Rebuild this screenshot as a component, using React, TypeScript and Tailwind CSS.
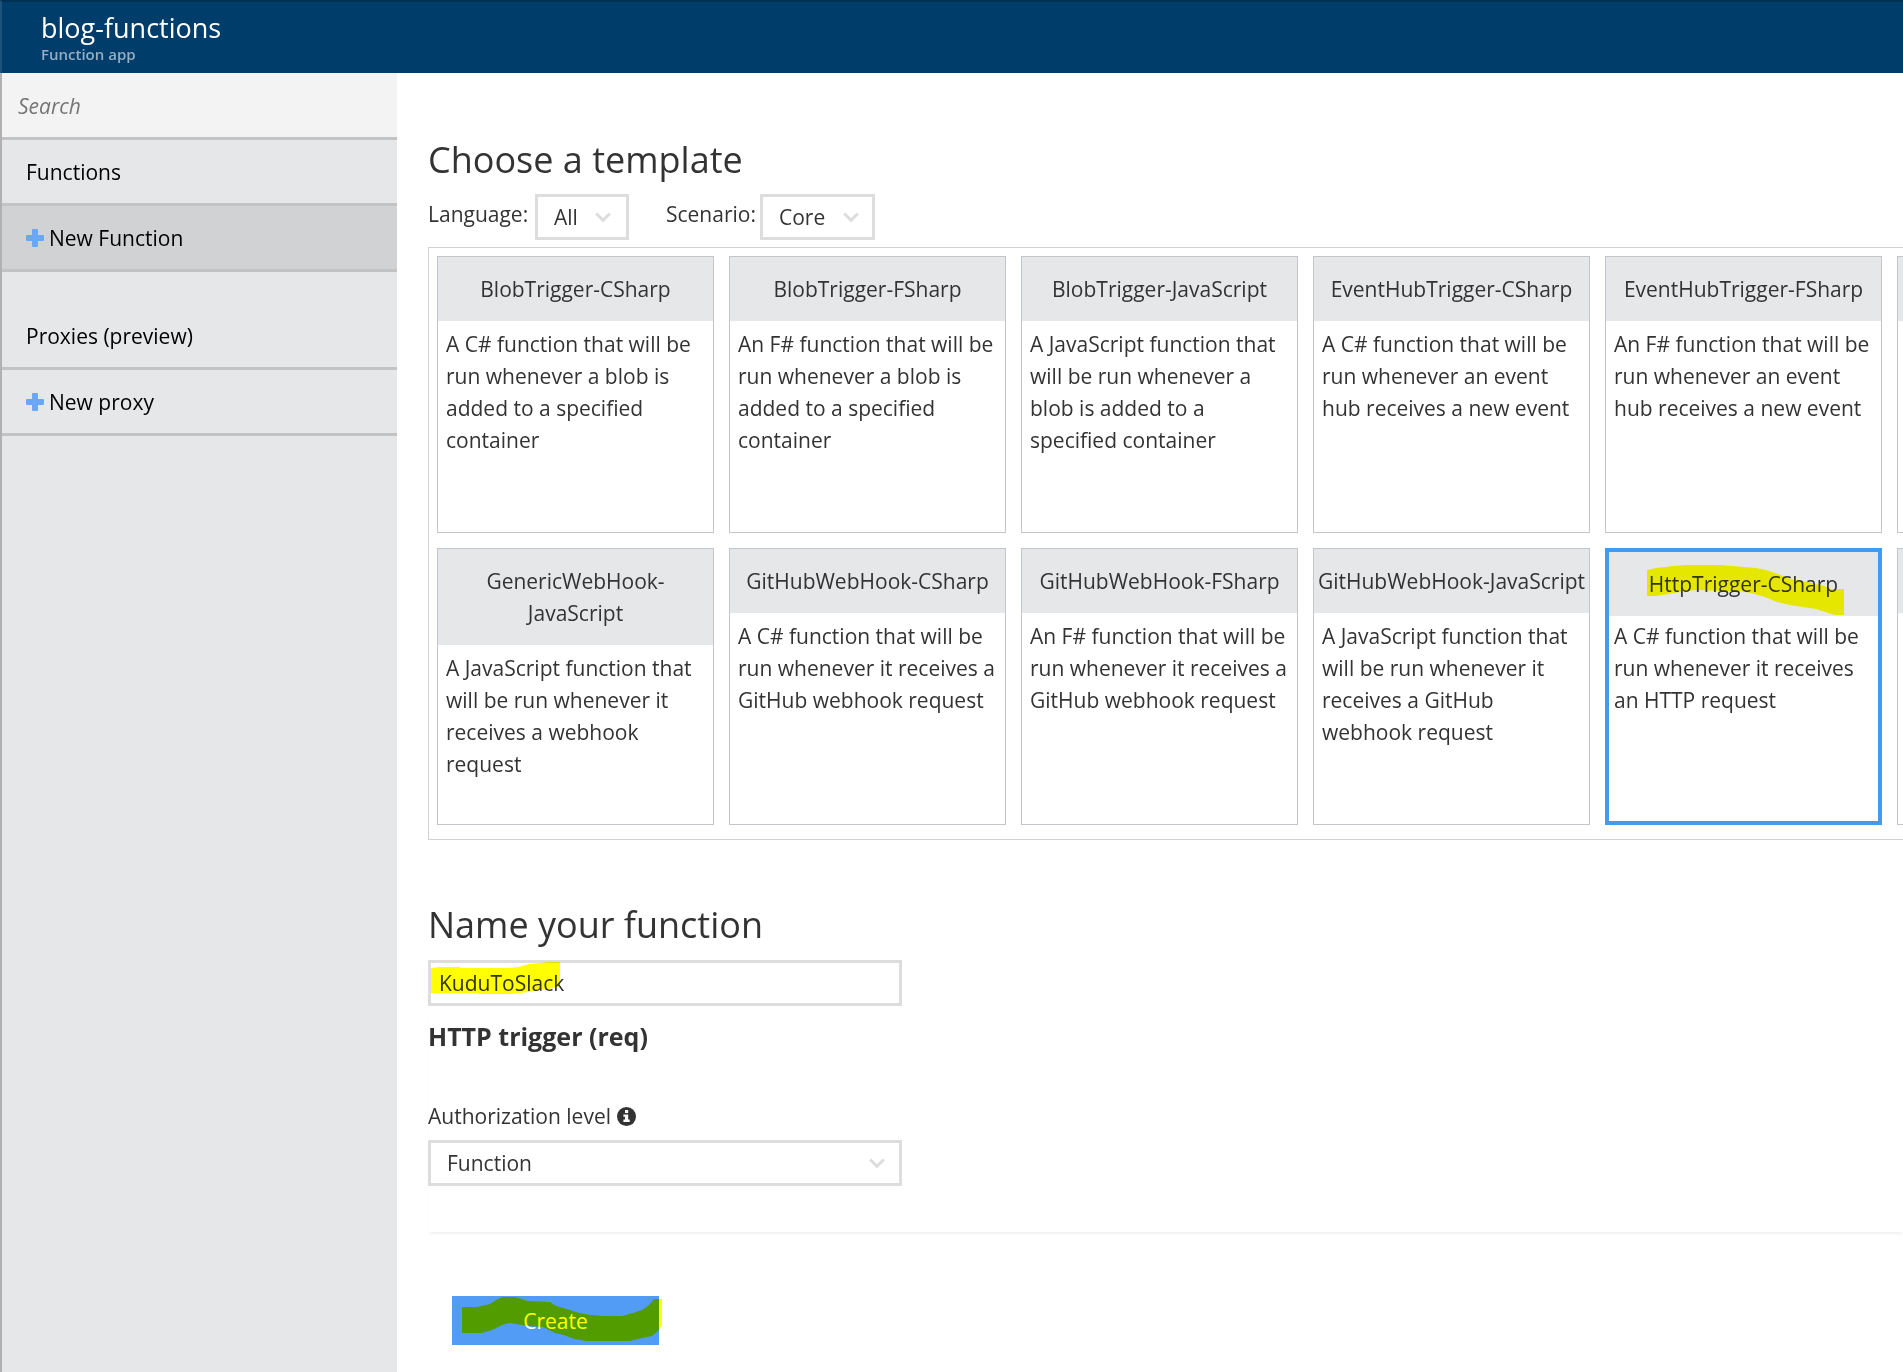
import type { ReactNode } from "react";

type Template = { title: string; text: string; selected?: boolean };

const templates: Template[] = [
  { title: "BlobTrigger-CSharp", text: "A C# function that will be run whenever a blob is added to a specified container" },
  { title: "BlobTrigger-FSharp", text: "An F# function that will be run whenever a blob is added to a specified container" },
  { title: "BlobTrigger-JavaScript", text: "A JavaScript function that will be run whenever a blob is added to a specified container" },
  { title: "EventHubTrigger-CSharp", text: "A C# function that will be run whenever an event hub receives a new event" },
  { title: "EventHubTrigger-FSharp", text: "An F# function that will be run whenever an event hub receives a new event" },
  { title: "", text: "" },
  { title: "GenericWebHook-JavaScript", text: "A JavaScript function that will be run whenever it receives a webhook request" },
  { title: "GitHubWebHook-CSharp", text: "A C# function that will be run whenever it receives a GitHub webhook request" },
  { title: "GitHubWebHook-FSharp", text: "An F# function that will be run whenever it receives a GitHub webhook request" },
  { title: "GitHubWebHook-JavaScript", text: "A JavaScript function that will be run whenever it receives a GitHub webhook request" },
  { title: "HttpTrigger-CSharp", text: "A C# function that will be run whenever it receives an HTTP request", selected: true },
  { title: "", text: "" },
];

function Plus() {
  return (
    <svg className="h-[18px] w-[18px] shrink-0" viewBox="0 0 18 18" fill="#6aa8f5" aria-hidden="true">
      <rect x="0" y="6" width="18" height="6" rx="1" />
      <rect x="6" y="0" width="6" height="18" rx="1" />
    </svg>
  );
}

function Info() {
  return (
    <svg className="h-[19px] w-[19px]" viewBox="0 0 19 19" aria-hidden="true">
      <circle cx="9.5" cy="9.5" r="9.5" fill="#333" />
      <path d="M8 3h3.2v3H8zM6.4 7.4h4.8v5.2h1.5V15H6.4v-2.4H8V9.8H6.4z" fill="#fff" />
    </svg>
  );
}

function Select({ id, options, className, arrow }: { id: string; options: string[]; className: string; arrow: string }) {
  return (
    <div className={`relative ${className}`}>
      <select
        id={id}
        className="block h-[46px] w-full appearance-none rounded-none border-3 border-[#dddddd] bg-white pl-4 leading-8 text-[#333] outline-none"
      >
        {options.map((o) => (
          <option key={o}>{o}</option>
        ))}
      </select>
      <svg
        className={`pointer-events-none absolute top-[18px] h-[11px] w-4 ${arrow}`}
        viewBox="0 0 16 11"
        fill="none"
        stroke="#dddddd"
        strokeWidth="3"
        aria-hidden="true"
      >
        <path d="M1.2 1.5 8 8.3l6.8-6.8" />
      </svg>
    </div>
  );
}

function NavLink({ children, active }: { children: ReactNode; active?: boolean }) {
  return (
    <a
      href="#"
      className={`flex h-[66px] items-center gap-[5px] border-b-3 border-[#c3c3c3] pl-6 ${active ? "bg-[#d1d2d4]" : ""}`}
    >
      <Plus />
      {children}
    </a>
  );
}

function TemplateCard({ title, text, selected }: Template) {
  return (
    <article className={`h-[277px] bg-white ${selected ? "border-4 border-[#409bf3]" : "border border-[#c2c5ca]"}`}>
      <h3 className="relative min-h-16 bg-[#e6e7e9] px-0.5 py-4 text-center">
        {title}
        {selected && (
          <svg
            className="pointer-events-none absolute top-3 left-[38px] h-[52px] w-[197px] mix-blend-multiply"
            viewBox="0 0 197 52"
            aria-hidden="true"
          >
            <path
              fill="#ffff00"
              d="M0 6 9 4 26 2 38 1H73L86 2 109 4 119 6 131 10 143 15 160 18 177 22 184 25H197V51H188L178 48 169 45 143 41 130 38 118 33 104 29 92 27H76L50 26 38 27 22 30 9 32H0Z"
            />
          </svg>
        )}
      </h3>
      <p className={selected ? "px-[5px] py-1" : "px-2 py-[7px]"}>{text}</p>
    </article>
  );
}

export default function App() {
  return (
    <div className="flex min-h-screen flex-col overflow-hidden bg-white font-['Open_Sans','Noto_Sans',sans-serif] text-[21px] leading-8 text-[#333]">
      <header className="h-[73px] border-t-2 border-l-2 border-t-[#003052] border-l-[#1c527b] bg-[#003d6b] pt-2 pl-[39px]">
        <h1 className="text-[27px] leading-9 text-white">blog-functions</h1>
        <p className="text-[15px] leading-4 font-semibold text-[#94aec3]">Function app</p>
      </header>

      <div className="flex flex-1">
        <aside className="w-[397px] shrink-0 border-l-2 border-[#b1b1b3] bg-[#e5e7e8] text-black">
          <input
            type="search"
            aria-label="Search"
            placeholder="Search"
            className="block h-[67px] w-full border-b-3 border-[#c3c3c3] bg-[#f3f3f3] pt-0.5 pl-4 outline-none placeholder:text-[#757575] placeholder:italic"
          />
          <nav>
            <h2 className="flex h-[66px] items-center border-b-3 border-[#c3c3c3] pl-6">Functions</h2>
            <NavLink active>New Function</NavLink>
            <h2 className="flex h-[98px] items-end border-b-3 border-[#c3c3c3] pb-[15px] pl-6">Proxies (preview)</h2>
            <NavLink>New proxy</NavLink>
          </nav>
        </aside>

        <main className="min-w-0 flex-1 overflow-hidden pt-16 pl-[31px]">
          <h2 className="text-[36px] leading-[46px]">Choose a template</h2>
          <div className="mt-[11px] flex">
            <label htmlFor="language" className="w-[107px] pt-1">
              Language:
            </label>
            <Select id="language" options={["All"]} className="w-[94px]" arrow="right-[18px]" />
            <label htmlFor="scenario" className="ml-[37px] w-[94px] pt-1">
              Scenario:
            </label>
            <Select id="scenario" options={["Core"]} className="w-[115px]" arrow="right-4" />
          </div>

          <section className="mt-[7px] grid w-max grid-cols-[repeat(6,277px)] gap-[15px] border border-[#d0d1d3] px-2 pt-2 pb-3.5">
            {templates.map((t, i) => (
              <TemplateCard key={i} {...t} />
            ))}
          </section>

          <h2 className="mt-[62px] text-[36px] leading-[46px]">
            <label htmlFor="name">Name your function</label>
          </h2>
          <div className="relative mt-3 w-[474px]">
            <input
              id="name"
              defaultValue="KuduToSlack"
              className="block h-[46px] w-full border-3 border-[#dddddd] bg-white pl-2 outline-none"
            />
            <svg
              className="pointer-events-none absolute top-0.5 left-[3px] h-8 w-[129px] mix-blend-multiply"
              viewBox="0 0 129 32"
              aria-hidden="true"
            >
              <path fill="#ffff00" d="M0 6 9 5H29V6H78L88 5 98 2 109 1 117 0H129V24L118 27 109 28 98 30 78 32H48V31H0Z" />
            </svg>
          </div>

          <section className="shadow-[0_3px_3px_-1px_rgba(0,0,0,0.06)]">
            <h3 className="pt-3.5 text-[25px] font-bold">HTTP trigger (req)</h3>
            <label htmlFor="auth" className="mt-12 flex items-center gap-1.5">
              Authorization level <Info />
            </label>
            <div className="pt-2 pb-[46px]">
              <Select id="auth" options={["Function"]} className="w-[474px]" arrow="right-[17px]" />
            </div>
          </section>

          <div className="relative mt-16 ml-6 w-[207px]">
            <button type="button" className="block h-[49px] w-full bg-[#529cf5] text-white">
              Create
            </button>
            <svg
              className="pointer-events-none absolute top-px left-2.5 h-11 w-[200px] mix-blend-multiply"
              viewBox="0 0 200 44"
              aria-hidden="true"
            >
              <path
                fill="#ffff00"
                d="M0 10H15L28 7 34 3 40 0H53L66 4 88 5 94 9 108 13 117 16 129 18 141 19H160L171 16 180 13 187 8 192 2H200V28L196 34 190 39 180 41 168 44H125L112 42 102 38 93 36 81 30 67 29 47 26 40 28 30 33 20 36H0Z"
              />
            </svg>
          </div>
        </main>
      </div>
    </div>
  );
}
